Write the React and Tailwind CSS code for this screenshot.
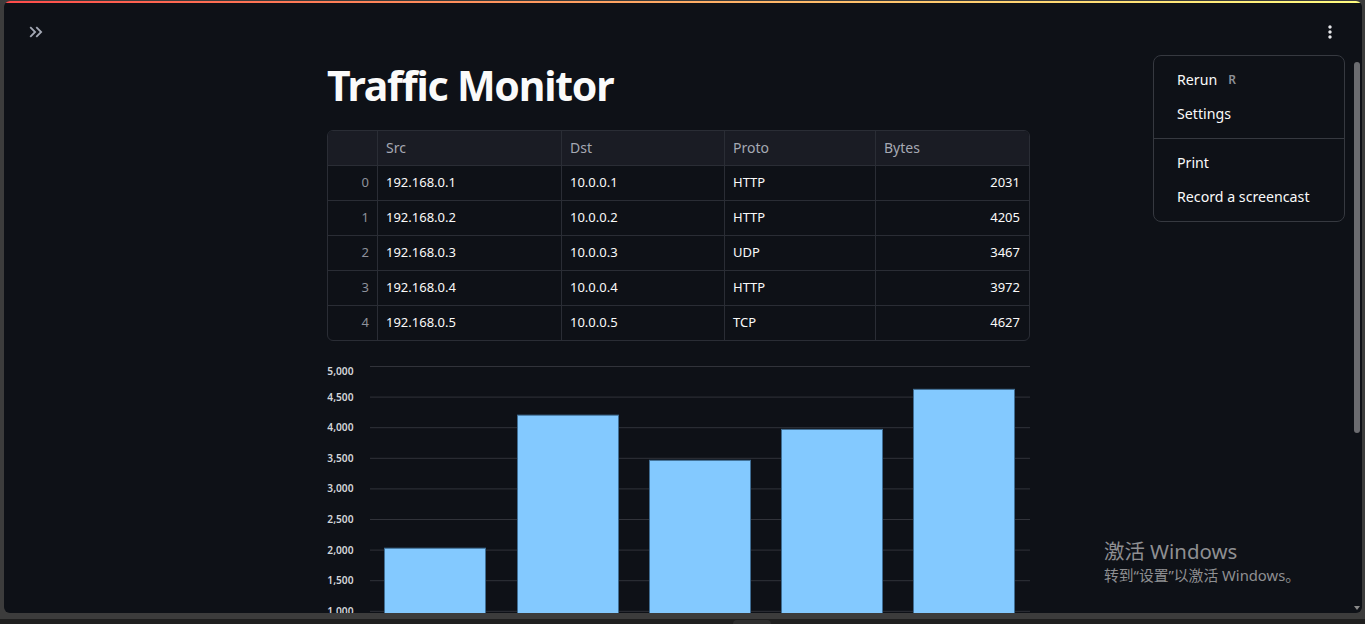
import React from "react";

const rows = [
  { i: 0, src: "192.168.0.1", dst: "10.0.0.1", proto: "HTTP", bytes: 2031 },
  { i: 1, src: "192.168.0.2", dst: "10.0.0.2", proto: "HTTP", bytes: 4205 },
  { i: 2, src: "192.168.0.3", dst: "10.0.0.3", proto: "UDP", bytes: 3467 },
  { i: 3, src: "192.168.0.4", dst: "10.0.0.4", proto: "HTTP", bytes: 3972 },
  { i: 4, src: "192.168.0.5", dst: "10.0.0.5", proto: "TCP", bytes: 4627 },
];

const font = { fontFamily: '"Noto Sans", "Noto Sans CJK SC", sans-serif' };

function Chart() {
  const top = 11;
  const per = 30.6 / 500;
  const yOf = (v) => top + (5000 - v) * per;
  const ticks = [5000, 4500, 4000, 3500, 3000, 2500, 2000, 1500, 1000];
  const bars = [57, 190, 322, 454, 586];
  return (
    <svg width="703" height="300" className="block overflow-visible">
      {ticks.map((t) => (
        <line key={t} x1="43" x2="703" y1={yOf(t) + 0.5} y2={yOf(t) + 0.5} stroke="#31333a" strokeWidth="1" />
      ))}
      {ticks.map((t, k) => (
        <text
          key={"l" + t}
          x="26.5"
          y={k === 0 ? yOf(t) + 9 : yOf(t) + 4}
          textAnchor="end"
          fontSize="10.2"
          fontWeight="600"
          fill="#d3d5da"
          style={{ fontFamily: '"Noto Sans", sans-serif' }}
        >
          {t.toLocaleString("en-US")}
        </text>
      ))}
      {rows.map((r, k) => (
        <rect
          key={k}
          x={bars[k] + 0.5}
          y={yOf(r.bytes) + 0.5}
          width="101"
          height={400}
          fill="#83c9ff"
          stroke="#3f6d93"
          strokeWidth="1"
        />
      ))}
    </svg>
  );
}

export default function App() {
  const cols = "grid grid-cols-[50px_184px_163px_151px_1fr]";
  return (
    <div className="relative w-[1365px] h-[624px] bg-[#3c3c3c] overflow-hidden flex flex-col" style={font}>
      <div className="h-[619px] pl-[4px] pr-[3px] pt-[1px]">
        <div className="relative h-[612px] bg-[#0e1117] rounded-[6px] overflow-hidden flex flex-col">
          <div className="h-[2px] bg-linear-to-r from-[#ff4b4b] to-[#fffd80] shrink-0" />
          <div className="h-[54px] shrink-0 flex justify-between items-start pt-[19px] pl-[21px] pr-[22px]">
            <svg width="22" height="22" viewBox="0 0 24 24" fill="#a3a8b4" className="-mt-[1px]">
              <path d="M6.41 6L5 7.41 9.58 12 5 16.59 6.41 18l6-6z" />
              <path d="M13 6l-1.41 1.41L16.17 12l-4.58 4.59L13 18l6-6z" />
            </svg>
            <svg width="20" height="20" viewBox="0 0 24 24" fill="#e6e7ea">
              <path d="M12 8c1.1 0 2-.9 2-2s-.9-2-2-2-2 .9-2 2 .9 2 2 2zm0 2c-1.1 0-2 .9-2 2s.9 2 2 2 2-.9 2-2-.9-2-2-2zm0 6c-1.1 0-2 .9-2 2s.9 2 2 2 2-.9 2-2-.9-2-2-2z" />
            </svg>
          </div>
          <div className="flex justify-center pr-[9px]">
            <div className="w-[703px] flex flex-col">
              <h1 className="text-[41px] font-bold leading-[52.8px] text-[#fafafa] tracking-[-1.2px] pt-[2px] -mb-[2px]">Traffic Monitor</h1>
              <div className="mt-[20px] border border-[#2a2d35] rounded-[6px] overflow-hidden">
                <div className={cols + " h-[35px] bg-[#1a1c24] text-[14px] text-[#a5a9b3] border-b border-[#2a2d35]"}>
                  <div className="border-r border-[#2a2d35]" />
                  <div className="border-r border-[#2a2d35] flex items-center pl-[8px]">Src</div>
                  <div className="border-r border-[#2a2d35] flex items-center pl-[8px]">Dst</div>
                  <div className="border-r border-[#2a2d35] flex items-center pl-[8px]">Proto</div>
                  <div className="flex items-center pl-[8px]">Bytes</div>
                </div>
                {rows.map((r, k) => (
                  <div
                    key={k}
                    className={
                      cols +
                      " text-[13px] text-[#fafafa] " +
                      (k < rows.length - 1 ? "h-[35px] border-b border-[#2a2d35]" : "h-[34px]")
                    }
                  >
                    <div className="border-r border-[#2a2d35] flex items-center justify-end pr-[8px] text-[#8e929b]">{r.i}</div>
                    <div className="border-r border-[#2a2d35] flex items-center pl-[8px]">{r.src}</div>
                    <div className="border-r border-[#2a2d35] flex items-center pl-[8px]">{r.dst}</div>
                    <div className="border-r border-[#2a2d35] flex items-center pl-[8px]">{r.proto}</div>
                    <div className="flex items-center justify-end pr-[9px]">{r.bytes}</div>
                  </div>
                ))}
              </div>
              <div className="mt-[14px]">
                <Chart />
              </div>
            </div>
          </div>

          {/* scrollbar */}
          <div className="absolute right-[2px] top-[61px] w-[6px] h-[371px] rounded-full bg-[#6b6c70]" />
          <div className="absolute right-[2px] bottom-[3px] w-0 h-0 border-l-[3px] border-r-[3px] border-t-[4px] border-l-transparent border-r-transparent border-t-[#8a8a8a]" />

          {/* menu */}
          <div className="absolute top-[54px] right-[17px] w-[192px] rounded-[8px] border border-[#363940] bg-[#0e1117] py-[7px] text-[14.2px] text-[#fafafa]">
            <div className="h-[34px] flex items-center pl-[23px]">
              <span>Rerun</span>
              <span className="ml-[11px] text-[12px] font-semibold text-[#8c8f96]">R</span>
            </div>
            <div className="h-[34px] flex items-center pl-[23px]">Settings</div>
            <div className="my-[7px] h-px bg-[#363940]" />
            <div className="h-[34px] flex items-center pl-[23px]">Print</div>
            <div className="h-[34px] flex items-center pl-[23px]">Record a screencast</div>
          </div>
        </div>
      </div>
      <div className="h-[5px] bg-[#1f1f1f] relative">
        <div className="absolute left-[733px] top-[1px] w-[38px] h-[6px] rounded-t-[4px] bg-[#2e2e2e]" />
      </div>

      {/* Windows activation watermark */}
      <div className="absolute left-[1104px] top-[538px] text-[#8e8f92] pointer-events-none">
        <div className="text-[20.4px] leading-[26px]">激活 Windows</div>
        <div className="text-[14.8px] leading-[20px] mt-[1px]">转到“设置”以激活 Windows。</div>
      </div>
    </div>
  );
}
